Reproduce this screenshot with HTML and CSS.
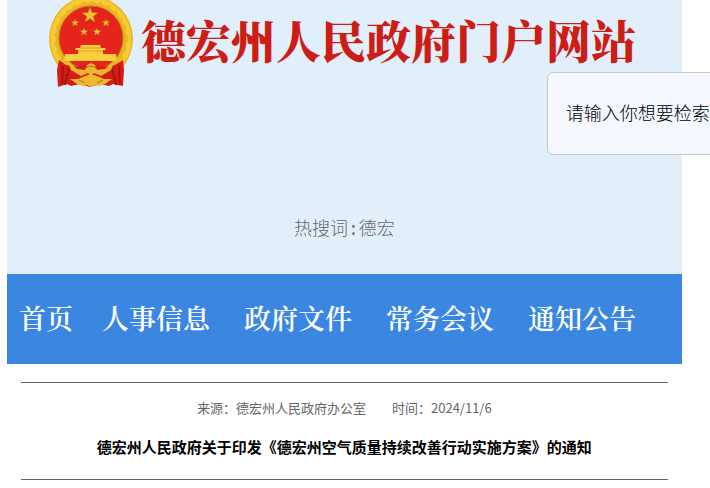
FILE: index.html
```html
<!DOCTYPE html>
<html lang="zh-CN">
<head>
    <meta charset="UTF-8">
    <meta name="viewport" content="width=device-width, initial-scale=1.0">
    <title>德宏州人民政府门户网站</title>
    <link rel="stylesheet" href="styles.css">
</head>
<body>
    <div class="page">
        <header class="header">
            <div class="brand">
                <svg class="emblem" viewBox="0 0 84 88" aria-hidden="true">
                    <!-- wreath -->
                    <ellipse cx="42" cy="39" rx="42" ry="43" fill="#e9b424"/>
                    <ellipse cx="42" cy="39" rx="38" ry="39" fill="none" stroke="#f8cb33" stroke-width="5"/>
                    <ellipse cx="42" cy="39" rx="36" ry="37" fill="none" stroke="#eab328" stroke-width="2" stroke-dasharray="3 6"/>
                    <ellipse cx="42" cy="38" rx="32" ry="32" fill="#e5251b" stroke="#b77a1e" stroke-width="1"/>
                    <!-- stars -->
                    <g fill="#f0c22e" stroke="#bd6a1a" stroke-width="0.5">
                        <path d="M41 7l2 5.500 6 .2-4.700 3.700 1.700 5.700-5-3.300-5 3.300 1.700-5.700-4.700-3.700 6-.2z"/>
                        <path d="M26 19l1 2.500 3 .1-2.300 1.800.8 2.800-2.500-1.600-2.500 1.600.8-2.800-2.300-1.800 3-.1z"/>
                        <path d="M57 19l1 2.500 3 .1-2.300 1.800.8 2.800-2.500-1.600-2.500 1.600.8-2.800-2.300-1.800 3-.1z"/>
                        <path d="M35 28l1 2.500 3 .1-2.300 1.800.8 2.800-2.500-1.600-2.500 1.600.8-2.800-2.300-1.800 3-.1z"/>
                        <path d="M48 28l1 2.500 3 .1-2.300 1.800.8 2.800-2.500-1.600-2.500 1.600.8-2.800-2.300-1.800 3-.1z"/>
                    </g>
                    <!-- gate tower -->
                    <path d="M32 45h19l1 3h4l1 2h-3v4h13l1 7H15l1-7h13v-4h-3l1-2h4z" fill="#f8cf3c"/>
                    <path d="M31 48h21M29 51h25" stroke="#e39a22" stroke-width="1"/>
                    <!-- ribbon -->
                    <path d="M10 60l7 5 13 2 11-3 12 3 13-2 8-5 1 10-1 16-10-2-4 2-9-2-10 3-10-3-9 2-4-2-9 3-1-17z" fill="#d51c16"/>
                    <path d="M14 66l-1 18M20 68l-4 17M63 68l4 17M70 66l1 18" stroke="#a91410" stroke-width="2"/>
                    <path d="M18 60l10 9 8 1 2-5 4-2 4 2 2 5 8-1 10-9-4 10-10 6-7-3-3 3-3-3-7 3-10-6z" fill="#eeb62c"/>
                    <path d="M21 79h8l7-3 6-2 6 2 7 3h8l-7 5-6 2-4-1-4 2-4-2-4 1-6-2z" fill="#ecb92f"/>
                    <path d="M37 68q5-4 10 0M30 80l6 3M54 80l-6 3" fill="none" stroke="#bc6b18" stroke-width="1"/>
                </svg>
                <h1 class="site-name">德宏州人民政府门户网站</h1>
            </div>
            <p class="hot-words">热搜词:德宏</p>
            <input class="search" type="text" aria-label="检索" value="请输入你想要检索">
        </header>

        <nav class="nav">
            <a href="#">首页</a>
            <a href="#">人事信息</a>
            <a href="#">政府文件</a>
            <a href="#">常务会议</a>
            <a href="#">通知公告</a>
        </nav>

        <main class="article">
            <div class="article-info">
                <span>来源：德宏州人民政府办公室</span>
                <span>时间：2024/11/6</span>
            </div>
            <h2 class="article-title">德宏州人民政府关于印发《德宏州空气质量持续改善行动实施方案》的通知</h2>
        </main>
    </div>
</body>
</html>
```
FILE: styles.css
```css
* {
    box-sizing: border-box;
}

body {
    margin: 0;
    font-family: "Noto Sans CJK SC", sans-serif;
    background-color: #fff;
    overflow-x: hidden;
}

.page {
    width: 95%;
    margin-left: 1%;
}

/* Header */
.header {
    position: relative;
    display: flex;
    flex-direction: column;
    justify-content: space-between;
    height: 274px;
    padding-bottom: 30px;
    background-color: #e1effa;
}

.brand {
    display: flex;
    align-items: flex-start;
    gap: 8px;
    padding-left: 42px;
}

.emblem {
    width: 84px;
    height: 88px;
    flex-shrink: 0;
}

.site-name {
    margin: 0;
    padding-top: 10px;
    font-family: "Noto Serif CJK SC", "Noto Sans CJK SC", serif;
    font-size: 45px;
    line-height: 60px;
    font-weight: 900;
    color: #cc1e16;
    white-space: nowrap;
}

.hot-words {
    margin: 0;
    font-family: "Liberation Mono", "Noto Sans CJK SC", monospace;
    font-size: 18px;
    font-weight: 300;
    line-height: 28px;
    color: #666;
    text-align: center;
}

/* Search box hangs over the right edge of the header */
.search {
    position: absolute;
    top: 72px;
    left: 80%;
    width: 30%;
    height: 83px;
    padding: 0 18px 4px;
    font-family: inherit;
    font-size: 18px;
    font-weight: 300;
    color: #000;
    background-color: #f4f7fd;
    border: 1px solid #c8c9ce;
    border-radius: 6px;
}

/* Nav */
.nav {
    display: flex;
    align-items: center;
    height: 90px;
    padding-bottom: 4px;
    background-color: #3a86e1;
}

.nav a {
    padding: 0 17px;
    font-family: "Noto Serif CJK SC", "Noto Sans CJK SC", serif;
    font-size: 27px;
    font-weight: 600;
    color: #fff;
    text-decoration: none;
    white-space: nowrap;
}

.nav a:first-child {
    padding: 0 12px;
}

/* Article */
.article {
    width: 96%;
    margin: 18px auto 0;
    padding: 15px 0 20px;
    border-top: 1px solid #666;
    border-bottom: 1px solid #666;
    text-align: center;
}

.article-info {
    display: flex;
    justify-content: center;
    gap: 26px;
    font-size: 13px;
    line-height: 20px;
    color: #666;
}

.article-title {
    margin: 17px 0 0;
    font-size: 15px;
    line-height: 24px;
    color: #000;
}
```
